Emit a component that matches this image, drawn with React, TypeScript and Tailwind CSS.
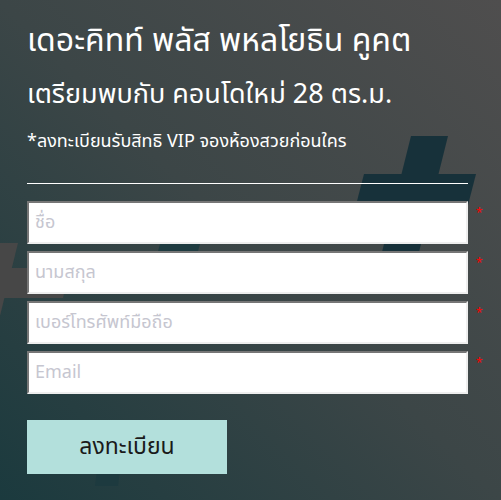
import React from "react";

const fields = ["ชื่อ", "นามสกุล", "เบอร์โทรศัพท์มือถือ", "Email"];

export default function App() {
  return (
    <div
      className="relative w-[501px] h-[500px] overflow-hidden bg-[linear-gradient(to_top_right,#1b3a3e_0%,#3c4647_50%,#4f4e4e_100%)]"
      style={{ fontFamily: '"Noto Sans Thai", "Noto Sans", "Liberation Sans", sans-serif' }}
    >
      <svg className="absolute inset-0" width="501" height="500" viewBox="0 0 501 500">
        <polygon points="411,136 448,136 419,252 382,252" fill="#17313a" />
        <polygon points="364,174 476,174 468,205 356,205" fill="#17313a" />
        <polygon points="-20,243 18,243 -6,340 -44,340" fill="#474747" />
        <polygon points="-10,268 70,268 63,298 -17,298" fill="#474747" />
        <polygon points="160,244 200,244 195,262 155,262" fill="#1e3b40" />
        <polygon points="97,470 120,470 118,486 95,486" fill="#1d3a3f" />
      </svg>
      <div className="relative pl-[27px] pt-[18px]">
        <h1 className="text-[32px] leading-[46px] text-white font-normal whitespace-nowrap">เดอะคิทท์ พลัส พหลโยธิน คูคต</h1>
        <h2 className="mt-[12px] text-[27px] leading-[38px] text-white font-normal whitespace-nowrap">เตรียมพบกับ คอนโดใหม่ 28 ตร.ม.</h2>
        <p className="mt-[16px] text-[18px] leading-[24px] text-white whitespace-nowrap">*ลงทะเบียนรับสิทธิ VIP จองห้องสวยก่อนใคร</p>
        <div className="mt-[29px] w-[441px] h-px bg-white" />
        <div className="mt-[17px] flex flex-col gap-[7px]">
          {fields.map((f) => (
            <div key={f} className="flex items-start">
              <div className="w-[441px] h-[43px] bg-white border-2 border-t-[#767676] border-l-[#767676] border-b-[#eeeeee] border-r-[#eeeeee] flex items-center pl-[6px] text-[18px] text-[#c6c6d0]">
                {f}
              </div>
              <span className="ml-[8px] mt-[6px] text-[12px] leading-[12px] text-[#ff0000]">*</span>
            </div>
          ))}
        </div>
        <button className="mt-[26px] w-[200px] h-[54px] bg-[#b3e0dc] text-[23px] text-[#1a1a1a] flex items-center justify-center">
          ลงทะเบียน
        </button>
      </div>
    </div>
  );
}
